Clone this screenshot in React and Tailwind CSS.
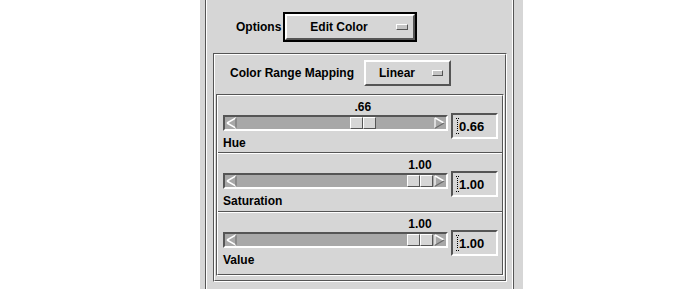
import React from "react";

function LeftArrow() {
  return (
    <svg width="11" height="12" viewBox="0 0 11 12" className="shrink-0 ml-[1px]">
      <polygon points="1,6 10,1 10,11" fill="#a8a8a8" />
      <line x1="1" y1="6" x2="10" y2="0.8" stroke="#ffffff" strokeWidth="1.5" />
      <line x1="1" y1="6" x2="10" y2="11.2" stroke="#ffffff" strokeWidth="1.5" />
      <line x1="10" y1="1" x2="10" y2="11" stroke="#6a6a6a" strokeWidth="1" />
    </svg>
  );
}

function RightArrow() {
  return (
    <svg width="11" height="12" viewBox="0 0 11 12" className="shrink-0 ml-auto mr-[1px]">
      <polygon points="10,6 1,1 1,11" fill="#a8a8a8" />
      <line x1="1" y1="0.8" x2="10" y2="6" stroke="#ffffff" strokeWidth="1.5" />
      <line x1="1" y1="1" x2="1" y2="11" stroke="#ffffff" strokeWidth="1.2" />
      <line x1="1" y1="11.2" x2="10" y2="6" stroke="#6a6a6a" strokeWidth="1.2" />
    </svg>
  );
}

function Cursor() {
  const dots = [];
  for (let y = 2; y <= 13; y += 2) dots.push(<rect key={y} x="2" y={y} width="1" height="1" fill="#000" />);
  return (
    <svg width="5" height="16" viewBox="0 0 5 16" className="shrink-0 ml-[2px]">
      <rect x="1" y="0" width="1" height="1" fill="#000" />
      <rect x="3" y="0" width="1" height="1" fill="#000" />
      {dots}
      <rect x="1" y="15" width="1" height="1" fill="#000" />
      <rect x="3" y="15" width="1" height="1" fill="#000" />
    </svg>
  );
}

function Indicator({ w }) {
  return (
    <div
      className={`${w} h-[6px] border border-t-white border-l-white border-b-[#555555] border-r-[#555555] bg-[#c4c4c4]`}
    />
  );
}

function SliderRow({ value, label, field, name, h }) {
  const off = 14 + value * 168;
  return (
    <div className={`flex pl-[5px] pr-[4px] pt-[4px] ${h}`}>
      <div className="w-[225px] flex flex-col">
        <div className="h-[14px] leading-[14px] flex">
          <div className="w-[26px] flex justify-center whitespace-nowrap" style={{ marginLeft: off + 2 }}>
            {label}
          </div>
        </div>
        <div className="mt-[1px] h-[16px] border-2 border-t-[#555555] border-l-[#555555] border-b-white border-r-white bg-[#a8a8a8] flex items-center">
          <LeftArrow />
          <div className="h-[12px] w-[26px] flex shrink-0" style={{ marginLeft: off - 12 }}>
            <div className="w-[13px] h-full border border-t-white border-l-white border-b-[#555555] border-r-[#555555] bg-[#d6d6d6]" />
            <div className="w-[13px] h-full border border-t-white border-l-white border-b-[#555555] border-r-[#555555] bg-[#d6d6d6]" />
          </div>
          <RightArrow />
        </div>
        <div className="mt-[5px] h-[14px] leading-[14px]">{name}</div>
      </div>
      <div className="ml-[3px] mt-[13px] w-[47px] h-[26px] border-2 border-t-[#555555] border-l-[#555555] border-b-white border-r-white bg-[#d6d6d6] flex items-center">
        <Cursor />
        <span className="ml-[-1px] pt-[2px] leading-[14px] text-[13px]">{field}</span>
      </div>
    </div>
  );
}

function Divider() {
  return <div className="h-[2px] border-t border-t-[#555555] border-b border-b-white" />;
}

export default function App() {
  return (
    <div className="w-[700px] h-[289px] bg-white flex overflow-hidden font-['Liberation_Sans',Arial,sans-serif] font-bold text-[12px] text-black">
      <div className="ml-[200px] w-[323px] h-[289px] bg-[#d6d6d6] pl-[5px] overflow-hidden">
        <div className="w-[309px] h-[300px] border-l border-l-[#555555] border-r border-r-[#555555]">
          <div className="h-full border-l border-l-white border-r border-r-white">
            {/* Options row */}
            <div className="flex items-center pt-[12px] pl-[29px] gap-[2px]">
              <span className="leading-[14px]">Options</span>
              <div className="w-[134px] h-[30px] border-2 border-black">
                <div className="w-full h-full border-2 border-t-white border-l-white border-b-[#555555] border-r-[#555555] flex items-center">
                  <span className="pl-[23px] leading-[14px]">Edit Color</span>
                  <div className="ml-auto mr-[5px]">
                    <Indicator w="w-[12px]" />
                  </div>
                </div>
              </div>
            </div>

            {/* Color Range Mapping box */}
            <div className="mt-[11px] ml-[6px] w-[294px] h-[229px] border border-t-[#555555] border-l-[#555555] border-b-white border-r-white">
              <div className="w-full h-full border border-t-white border-l-white border-b-[#555555] border-r-[#555555] flex flex-col">
                <div className="flex items-center pl-[15px] pt-[5px] gap-[10px]">
                  <span className="leading-[14px]">Color Range Mapping</span>
                  <div className="w-[87px] h-[26px] border-2 border-t-white border-l-white border-b-[#555555] border-r-[#555555] flex items-center">
                    <span className="pl-[13px] leading-[14px]">Linear</span>
                    <div className="ml-auto mr-[6px]">
                      <Indicator w="w-[11px]" />
                    </div>
                  </div>
                </div>

                <div className="mt-[8px] mx-[1px] border border-t-[#555555] border-l-[#555555] border-b-white border-r-white">
                  <div className="border border-t-white border-l-white border-b-[#555555] border-r-[#555555]">
                    <SliderRow value={0.66} label=".66" field="0.66" name="Hue" h="h-[56px]" />
                    <Divider />
                    <SliderRow value={1} label="1.00" field="1.00" name="Saturation" h="h-[57px]" />
                    <Divider />
                    <SliderRow value={1} label="1.00" field="1.00" name="Value" h="h-[61px]" />
                  </div>
                </div>
              </div>
            </div>
          </div>
        </div>
      </div>
    </div>
  );
}
